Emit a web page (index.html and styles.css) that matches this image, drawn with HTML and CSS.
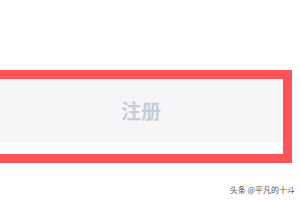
FILE: index.html
```html
<!DOCTYPE html>
<html lang="zh">
<head>
<meta charset="utf-8">
<link rel="stylesheet" href="styles.css">
</head>
<body>
<div class="page">
  <div class="frame">
    <div class="btn">注册</div>
    <div class="gap"></div>
  </div>
  <div class="mark">头条 @平凡的十斗</div>
</div>
</body>
</html>
```
FILE: styles.css
```css
html, body {
  margin: 0;
  padding: 0;
  background: #ffffff;
}
.page {
  width: 300px;
  height: 200px;
  overflow: hidden;
  padding-top: 70px;
  box-sizing: border-box;
  font-family: "Noto Sans CJK SC", "Noto Sans", sans-serif;
}
.frame {
  margin-left: -10px;
  width: 302px;
  box-sizing: border-box;
  border: 9px solid #fe5456;
}
.btn {
  height: 63px;
  background: #f6f6f8;
  display: flex;
  align-items: center;
  justify-content: center;
  font-size: 20px;
  font-weight: 700;
  color: #c9ccd4;
}
.gap {
  height: 12px;
  background: #ffffff;
}
.mark {
  margin-top: 22px;
  text-align: right;
  padding-right: 5px;
  font-size: 8px;
  line-height: 10px;
  color: #555555;
}
```
